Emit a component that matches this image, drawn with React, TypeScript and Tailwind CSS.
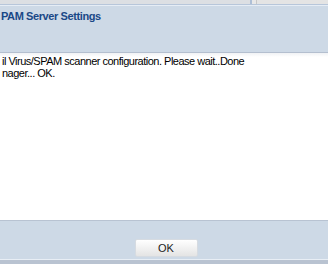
import React from "react";

export default function App() {
  const font = { fontFamily: "'Liberation Sans', Arial, sans-serif" };
  return (
    <div className="w-[328px] h-[264px] overflow-hidden flex flex-col bg-white" style={font}>
      {/* top strip */}
      <div className="h-[4px] flex bg-[#e2e2e2]">
        <div className="w-[250px] bg-[#dcdfe3]" />
        <div className="w-[2px] bg-[#aebfd6]" />
        <div className="w-[4px] bg-[#e8e8e8]" />
        <div className="w-[1px] bg-[#c8c8c8]" />
        <div className="flex-1 bg-[#e4e4e4]" />
      </div>
      <div className="h-[1px] bg-[#b7c6da]" />
      <div className="h-[1px] bg-[#e6edf5]" />
      {/* header */}
      <div className="h-[46px] bg-[#cdd9e6] pl-[1px] pt-[3px]">
        <div className="text-[11px] font-bold text-[#1a4886] whitespace-nowrap leading-[14px] tracking-[-0.4px]">
          PAM Server Settings
        </div>
      </div>
      <div className="h-[1px] bg-[#b4bfcf]" />
      {/* body */}
      <div className="flex-1 bg-gradient-to-b from-[#f0f2f5] via-white to-white bg-[length:100%_8px] bg-no-repeat pl-[2px] pt-[2px]">
        <div className="text-[11px] text-black leading-[12px] whitespace-nowrap tracking-[-0.5px]">
          <div>il Virus/SPAM scanner configuration. Please wait..Done</div>
          <div>nager... OK.</div>
        </div>
      </div>
      {/* footer */}
      <div className="h-[1px] bg-[#b8c3d2]" />
      <div className="h-[38px] bg-[#cdd9e6] flex items-end justify-center pb-[2px]">
        <button className="w-[63px] h-[18px] ml-[4px] rounded-[2px] border border-[#d6dbe1] bg-gradient-to-b from-white to-[#e4e4e4] text-[11px] text-[#222] leading-none">
          OK
        </button>
      </div>
      <div className="h-[1px] bg-[#e8eef5]" />
      <div className="h-[4px] bg-[#b9c3d1]" />
    </div>
  );
}
